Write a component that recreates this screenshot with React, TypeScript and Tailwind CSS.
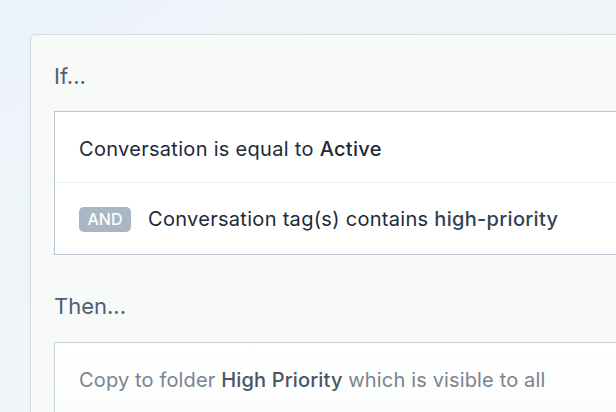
import React from 'react';

const font = { fontFamily: 'Inter, "Noto Sans", sans-serif' };

const App: React.FC = () => {
  return (
    <div
      className="h-[412px] w-[616px] overflow-hidden bg-gradient-to-br from-[#edf4f9] to-[#f4f8fb] pl-[30px] pt-[34px]"
      style={font}
    >
      <div className="w-[700px] rounded-[5px] border border-[#d2dae2] bg-[#f8f9f9] pl-[23px] pt-[27px] pb-10 shadow-[0_1px_3px_rgba(120,140,160,0.12)]">
        <div className="text-[22px] leading-[28px] text-[#4d5f70]">If...</div>

        <div className="mt-[21px] border border-[#b9c5d1] bg-white">
          <div className="flex h-[71px] items-center border-b border-[#eceef0] pl-6 pt-[3px] text-[20px] tracking-[0.3px] text-[#1c2a39]">
            <span>
              Conversation is equal to <span className="font-medium">Active</span>
            </span>
          </div>
          <div className="flex h-[71px] items-center gap-[17px] pl-6 pt-[1px] text-[20px] tracking-[0.3px] text-[#1c2a39]">
            <span className="flex h-[25px] w-[52px] items-center justify-center rounded-[5px] bg-[#a9b6c3] text-[16px] font-medium tracking-normal text-white">
              AND
            </span>
            <span>
              Conversation tag(s) contains{' '}
              <span className="font-medium text-[#2f4255]">high-priority</span>
            </span>
          </div>
        </div>

        <div className="mt-[37px] text-[22px] leading-[28px] text-[#4d5f70]">Then...</div>

        <div className="mt-[22px] border border-[#c8d2dc] bg-gradient-to-b from-white to-[#fbfcfc]">
          <div className="flex h-[72px] items-center pl-6 pt-[2px] text-[20px] tracking-[0.15px] text-[#7a848e]">
            <span>
              Copy to folder <span className="font-medium text-[#4a5662]">High Priority</span> which is
              visible to all
            </span>
          </div>
        </div>
      </div>
    </div>
  );
};

export default App;
